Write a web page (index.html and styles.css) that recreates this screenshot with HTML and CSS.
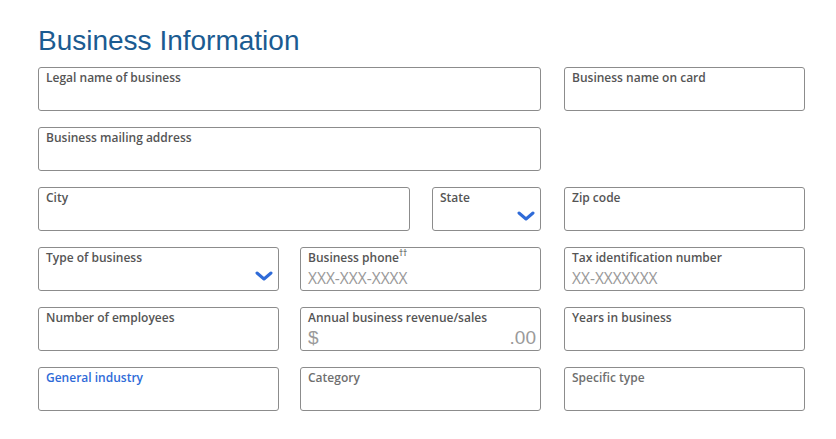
FILE: index.html
```html
<!DOCTYPE html>
<html>
<head>
<meta charset="utf-8">
<link rel="stylesheet" href="styles.css">
</head>
<body>
<div class="page">
  <h1 class="title">Business Information</h1>
  <div class="form">
    <div class="field span2"><span class="label">Legal name of business</span></div>
    <div class="field c3"><span class="label">Business name on card</span></div>

    <div class="field span2"><span class="label">Business mailing address</span></div>
    <div class="empty"></div>

    <div class="pair span2">
      <div class="field city"><span class="label">City</span></div>
      <div class="field select state"><span class="label">State</span>
        <svg class="chev" width="18" height="10" viewBox="0 0 18 10"><path d="M2 2 L9 8 L16 2" fill="none" stroke="#2f6bd8" stroke-width="3" stroke-linecap="round" stroke-linejoin="round"/></svg>
      </div>
    </div>
    <div class="field c3"><span class="label">Zip code</span></div>

    <div class="field select"><span class="label">Type of business</span>
      <svg class="chev" width="18" height="10" viewBox="0 0 18 10"><path d="M2 2 L9 8 L16 2" fill="none" stroke="#2f6bd8" stroke-width="3" stroke-linecap="round" stroke-linejoin="round"/></svg>
    </div>
    <div class="field"><span class="label">Business phone<sup class="sup">††</sup></span><span class="ph">XXX-XXX-XXXX</span></div>
    <div class="field c3"><span class="label">Tax identification number</span><span class="ph">XX-XXXXXXX</span></div>

    <div class="field"><span class="label">Number of employees</span></div>
    <div class="field"><span class="label">Annual business revenue/sales</span><span class="money"><span>$</span><span>.00</span></span></div>
    <div class="field c3"><span class="label">Years in business</span></div>

    <div class="field"><span class="label active">General industry</span></div>
    <div class="field"><span class="label dim">Category</span></div>
    <div class="field c3"><span class="label dim">Specific type</span></div>
  </div>
</div>
</body>
</html>
```
FILE: styles.css
```css
html, body {
  margin: 0;
  padding: 0;
  background: #fff;
}
.page {
  padding: 24px 0 0 38px;
}
.title {
  margin: 0 0 9px 0;
  font-family: "Liberation Sans", Arial, sans-serif;
  font-weight: normal;
  font-size: 28px;
  line-height: 34px;
  color: #1b5b91;
}
.form {
  display: grid;
  grid-template-columns: 241px 241px 243px;
  column-gap: 21px;
  row-gap: 16px;
}
.span2 {
  grid-column: span 2;
}
.c3 {
  margin-left: 2px;
}
.pair {
  display: flex;
  gap: 22px;
}
.city {
  flex: 1;
}
.state {
  width: 109px;
  flex: none;
}
.field {
  position: relative;
  box-sizing: border-box;
  height: 44px;
  border: 1px solid #8c8c8c;
  border-radius: 3px;
  padding: 2px 7px 0 7px;
  display: flex;
  flex-direction: column;
  font-family: "Open Sans", sans-serif;
}
.label {
  font-size: 12px;
  font-weight: 600;
  line-height: 16px;
  color: #555;
}
.label.active {
  color: #2f6bd8;
}
.label.dim {
  color: #6f6f6f;
}
.sup {
  font-size: 8px;
  line-height: 0;
  vertical-align: 6px;
}
.ph {
  font-size: 15.5px;
  line-height: 20px;
  color: #999;
  margin-top: 2px;
}
.money {
  display: flex;
  justify-content: space-between;
  font-family: "Liberation Sans", Arial, sans-serif;
  font-size: 19px;
  line-height: 20px;
  color: #9a9a9a;
  margin-top: 2px;
  margin-right: -3px;
}
.chev {
  position: absolute;
  right: 5px;
  bottom: 9px;
}
```
